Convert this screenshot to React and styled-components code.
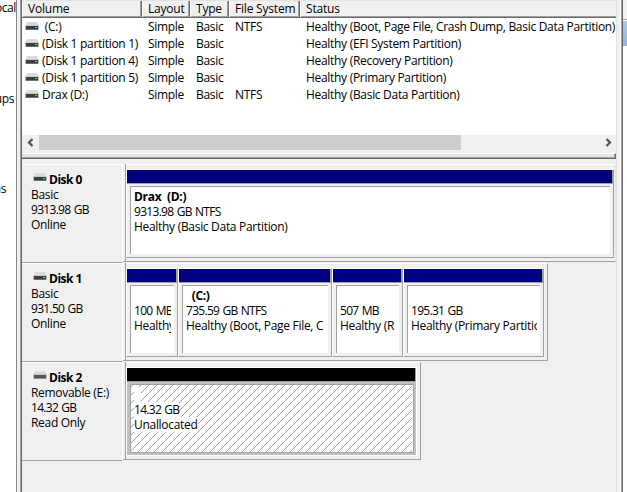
import React from 'react';
import styled, { createGlobalStyle } from 'styled-components';

const GlobalStyle = createGlobalStyle`
    * {
        box-sizing: border-box;
    }
    body {
        margin: 0;
        overflow: hidden;
        background: #fff;
        font-family: 'Open Sans', 'Noto Sans', sans-serif;
        font-size: 12px;
        line-height: 15px;
        letter-spacing: -0.3px;
        color: #000;
    }
`;

const Window = styled.div`
    display: flex;
    width: 627px;
    height: 492px;
    overflow: hidden;
`;

const Tree = styled.div`
    display: flex;
    flex-direction: column;
    align-items: flex-end;
    width: 16px;
    flex: none;
`;

const TreeText = styled.div`
    white-space: pre;
    letter-spacing: -0.4px;
    margin-top: ${(p) => p.$top}px;
    margin-right: ${(p) => p.$right || 0}px;
`;

const Gutter = styled.div`
    width: 6px;
    flex: none;
    background: #f0f0f0;
    border-left: 1px solid #828790;
    border-right: 1px solid #696969;
    box-shadow: inset -1px 0 #a0a0a0;
`;

const Main = styled.div`
    display: flex;
    flex-direction: column;
    width: 594px;
    flex: none;
    background: #f0f0f0;
`;

const HeaderRow = styled.div`
    display: flex;
    height: 18px;
    flex: none;
    background: #f0f0f0;
    border-top: 1px solid #e3e3e3;
    border-bottom: 1px solid #696969;
    box-shadow: inset 0 -1px #a0a0a0;
`;

const HeaderCell = styled.div`
    width: ${(p) => p.$w}px;
    height: 16px;
    flex: none;
    padding-left: 5px;
    white-space: pre;
    letter-spacing: -0.2px;
    border-left: 1px solid #fff;
    border-right: ${(p) => (p.$last ? 'none' : '1px solid #696969')};
    box-shadow: ${(p) => (p.$last ? 'none' : 'inset -1px 0 #a0a0a0')};
`;

const List = styled.div`
    height: 117px;
    flex: none;
    background: #fff;
`;

const ListRow = styled.div`
    display: flex;
    height: 17px;
    line-height: 17px;
`;

const ListCell = styled.div`
    display: flex;
    align-items: center;
    width: ${(p) => p.$w}px;
    flex: none;
    white-space: pre;
    padding-left: ${(p) => p.$pad || 0}px;
`;

const ScrollBar = styled.div`
    display: flex;
    height: 15px;
    flex: none;
    background: #f0f0f0;
`;

const ScrollButton = styled.div`
    display: flex;
    align-items: center;
    justify-content: center;
    width: 17px;
`;

const Thumb = styled.div`
    width: 422px;
    background: #cdcdcd;
    margin-right: 138px;
`;

const Splitter = styled.div`
    height: 6px;
    flex: none;
    margin-top: 3px;
    background: #e3e3e3;
    border-top: 1px solid #fff;
    border-right: 1px solid #696969;
    border-bottom: 1px solid #696969;
    box-shadow: inset -1px -1px #a0a0a0;
`;

const Disks = styled.div`
    padding-top: 5px;
`;

const DiskRow = styled.div`
    display: flex;
    height: 99px;
`;

const DiskLabel = styled.div`
    width: 101px;
    height: 99px;
    flex: none;
    padding: 7px 0 0 9px;
    white-space: pre;
    border-top: 1px solid #fff;
    border-bottom: 1px solid #a0a0a0;
    border-right: 1px solid #fff;
`;

const DiskName = styled.div`
    display: flex;
    padding-left: 2px;
    height: 15px;
    font-weight: bold;
    letter-spacing: -0.5px;
    gap: 2px;

    svg {
        margin-top: 1px;
    }
`;

const Size = styled.div`
    letter-spacing: -0.7px;
    word-spacing: 0.8px;
`;

const Rail = styled.div`
    width: 3px;
    height: 98px;
    flex: none;
    border-right: 1px solid #a0a0a0;
    border-bottom: 1px solid #a0a0a0;
`;

const Parts = styled.div`
    display: flex;
    height: 98px;
    width: ${(p) => p.$w}px;
    padding: 4px 0 4px 0;
    border-top: 1px solid #fff;
    border-bottom: 1px solid #a0a0a0;
    border-right: 1px solid ${(p) => (p.$full ? '#e3e3e3' : '#a0a0a0')};
`;

const Part = styled.div`
    display: flex;
    flex-direction: column;
    width: ${(p) => p.$w}px;
    height: 89px;
    flex: none;
    border-top: 1px solid #fff;
    border-left: 1px solid #fff;
    border-bottom: 1px solid ${(p) => (p.$free ? '#fff' : '#a0a0a0')};
    border-right: 1px solid ${(p) => (p.$free ? '#fff' : '#a0a0a0')};
    background: ${(p) => (p.$free ? '#c0c0c0' : '#f0f0f0')};
`;

const Bar = styled.div`
    height: 14px;
    flex: none;
    background: ${(p) => p.$color};
    border-right: 1px solid #a0a0a0;
    border-bottom: 1px solid #a0a0a0;
`;

const Box = styled.div`
    display: grid;
    height: 68px;
    margin: 2px 3px 0 3px;
    background: #fff;
    border-top: 1px solid #a0a0a0;
    border-left: 1px solid #a0a0a0;
    ${(p) => p.$free && 'height: 69px; margin-right: 2px; border-right: 1px solid #a0a0a0; border-bottom: 1px solid #a0a0a0;'}

    > * {
        grid-area: 1 / 1;
        min-width: 0;
    }
`;

const Lines = styled.div`
    display: flex;
    flex-direction: column;
    align-items: flex-start;
    margin: 2px 3px 0 3px;
    overflow: hidden;
    white-space: pre;
    z-index: 1;
`;

const Line = styled.div`
    height: 15px;
    min-width: 7px;
    background: #fff;
    letter-spacing: ${(p) => (p.$tight ? '-0.7px' : '-0.3px')};
    word-spacing: ${(p) => (p.$tight ? '0.8px' : '0')};
    font-weight: ${(p) => (p.$bold ? 'bold' : 'normal')};
`;

const Edge = styled.div`
    width: 7px;
    flex: none;
    background: #f0f0f0;
    border-left: 1px solid #e3e3e3;
    border-right: 1px solid #696969;
    box-shadow: inset -1px 0 #a0a0a0, inset -2px 0 #fff;
`;

const Actions = styled.div`
    display: flex;
    flex-direction: column;
    flex: 1;
    background: #fff;
`;

const ActionsTitle = styled.div`
    height: 20px;
    background: #f0f0f0;
    border-bottom: 1px solid #a0a0a0;
`;

const ActionsItem = styled.div`
    height: 25px;
    margin-top: 1px;
    background: linear-gradient(#b0c8e2, #96b4d6);
`;

function DriveIcon({ removable }) {
    return (
        <svg width="14" height="9" viewBox="0 0 14 9" shapeRendering="crispEdges">
            <path d="M2 0h10v1h1v3H1V1h1z" fill="#d9dcdf" />
            <path d="M0 3h14v1H0z" fill="#c9ccd0" />
            <path d="M0 4h14v4H0z" fill="#c0c3c6" />
            <path d="M1 4h12v3H1z" fill={removable ? '#54575a' : '#3b3e40'} />
            <path d="M1 7h12v1H1z" fill={removable ? '#8a8d90' : '#6e7173'} />
            {!removable && <path d="M10 5h2v1h-2z" fill="#3cf048" />}
        </svg>
    );
}

function Arrow({ right }) {
    return (
        <svg width="10" height="9" viewBox="0 0 10 9">
            <path d={right ? 'M3.5 1L7 4.5L3.5 8' : 'M6.5 1L3 4.5L6.5 8'} fill="none" stroke="#505050" strokeWidth="2.2" />
        </svg>
    );
}

function Hatch() {
    return (
        <svg width="281" height="67" shapeRendering="crispEdges">
            <defs>
                <pattern id="hatch" width="8" height="8" patternUnits="userSpaceOnUse">
                    {[0, 1, 2, 3, 4, 5, 6, 7].map((i) => (
                        <rect key={i} x={7 - i} y={(i + 2) % 8} width="1" height="1" fill="#a0a0a0" />
                    ))}
                </pattern>
            </defs>
            <rect width="281" height="67" fill="url(#hatch)" />
        </svg>
    );
}

const volumes = [
    { name: ' (C:)', fs: 'NTFS', status: 'Healthy (Boot, Page File, Crash Dump, Basic Data Partition)' },
    { name: '(Disk 1 partition 1)', fs: '', status: 'Healthy (EFI System Partition)' },
    { name: '(Disk 1 partition 4)', fs: '', status: 'Healthy (Recovery Partition)' },
    { name: '(Disk 1 partition 5)', fs: '', status: 'Healthy (Primary Partition)' },
    { name: 'Drax (D:)', fs: 'NTFS', status: 'Healthy (Basic Data Partition)' },
];

const disks = [
    {
        name: 'Disk 0', type: 'Basic', size: '9313.98 GB', state: 'Online', width: 491, full: true,
        parts: [{ w: 488, name: 'Drax  (D:)', size: '9313.98 GB NTFS', status: 'Healthy (Basic Data Partition)' }],
    },
    {
        name: 'Disk 1', type: 'Basic', size: '931.50 GB', state: 'Online', width: 422,
        parts: [
            { w: 52, name: ' ', size: '100 MB', status: 'Healthy' },
            { w: 154, name: '  (C:)', size: '735.59 GB NTFS', status: 'Healthy (Boot, Page File, C' },
            { w: 71, name: ' ', size: '507 MB', status: 'Healthy (R' },
            { w: 141, name: ' ', size: '195.31 GB', status: 'Healthy (Primary Partitio' },
        ],
    },
    {
        name: 'Disk 2', type: 'Removable (E:)', size: '14.32 GB', state: 'Read Only', width: 295, removable: true,
        parts: [{ w: 291, name: ' ', size: '14.32 GB', status: 'Unallocated', free: true }],
    },
];

function App() {
    return (
        <Window>
            <GlobalStyle />
            <Tree>
                <TreeText $top={0}>ocal</TreeText>
                <TreeText $top={76} $right={2}>ups</TreeText>
                <TreeText $top={75} $right={10}>ns</TreeText>
            </Tree>
            <Gutter />
            <Main>
                <HeaderRow>
                    <HeaderCell $w={120}>Volume</HeaderCell>
                    <HeaderCell $w={48}>Layout</HeaderCell>
                    <HeaderCell $w={39}>Type</HeaderCell>
                    <HeaderCell $w={71}>File System</HeaderCell>
                    <HeaderCell $w={316} $last>Status</HeaderCell>
                </HeaderRow>
                <List>
                    {volumes.map((v) => (
                        <ListRow key={v.name}>
                            <ListCell $w={20} $pad={3}><DriveIcon /></ListCell>
                            <ListCell $w={106}>{v.name}</ListCell>
                            <ListCell $w={48}>Simple</ListCell>
                            <ListCell $w={39}>Basic</ListCell>
                            <ListCell $w={71}>{v.fs}</ListCell>
                            <ListCell $w={310}>{v.status}</ListCell>
                        </ListRow>
                    ))}
                </List>
                <ScrollBar>
                    <ScrollButton><Arrow /></ScrollButton>
                    <Thumb />
                    <ScrollButton><Arrow right /></ScrollButton>
                </ScrollBar>
                <Splitter />
                <Disks>
                    {disks.map((d) => (
                        <DiskRow key={d.name}>
                            <DiskLabel>
                                <DiskName>
                                    <DriveIcon removable={d.removable} />
                                    {d.name}
                                </DiskName>
                                <div>{d.type}</div>
                                <Size>{d.size}</Size>
                                <div>{d.state}</div>
                            </DiskLabel>
                            <Rail />
                            <Parts $w={d.width} $full={d.full}>
                                {d.parts.map((p) => (
                                    <Part key={p.size} $w={p.w} $free={p.free}>
                                        <Bar $color={p.free ? '#000' : '#000080'} />
                                        <Box $free={p.free}>
                                            {p.free && <Hatch />}
                                            <Lines>
                                                <Line $bold>{p.name}</Line>
                                                <Line $tight>{p.size}</Line>
                                                <Line>{p.status}</Line>
                                            </Lines>
                                        </Box>
                                    </Part>
                                ))}
                            </Parts>
                        </DiskRow>
                    ))}
                </Disks>
            </Main>
            <Edge />
            <Actions>
                <ActionsTitle />
                <ActionsItem />
            </Actions>
        </Window>
    );
}

export default App;
